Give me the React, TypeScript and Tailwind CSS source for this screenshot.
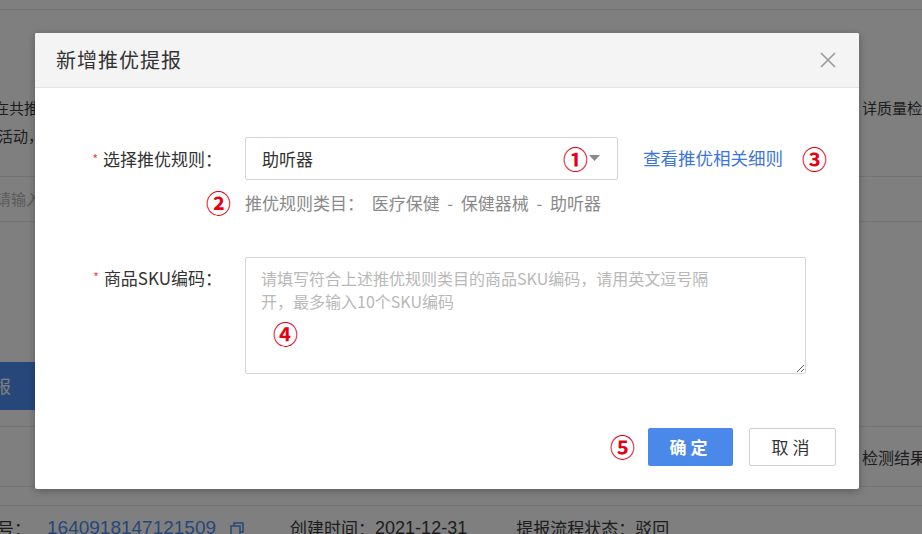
import React from "react";

const F = "font-['Noto_Sans_CJK_SC','Noto_Sans',sans-serif]";

function Num({ c, className = "" }: { c: string; className?: string }) {
  return (
    <span className={`text-[25px] leading-none font-bold text-[#e60012] ${className}`}>{c}</span>
  );
}

function Page() {
  return (
    <div className={`flex h-[534px] w-[922px] flex-col bg-white text-[#3a3a3a] ${F}`}>
      <div className="h-[10px] shrink-0 border-b border-[#e8e8e8]" />
      <div className="mt-[87px] flex h-[20px] shrink-0 items-center justify-between text-[15px] leading-none">
        <span className="-ml-[6px]">在共推优活动</span>
        <span className="-mr-[15px]">详质量检测</span>
      </div>
      <div className="mt-[8px] flex h-[20px] shrink-0 items-center text-[15px] leading-none">
        <span className="-ml-[2px]">活动，</span>
      </div>
      <div className="mt-[31px] flex h-[46px] shrink-0 items-center border-y border-[#e8e8e8] text-[15px] text-[#b5b5b5]">
        <span className="-ml-[4px]">请输入</span>
      </div>
      <div className="mt-[140px] flex h-[48px] w-[35px] shrink-0 items-center bg-[#4e8ef5] text-[17px] text-white">
        <span className="-ml-[6px]">报</span>
      </div>
      <div className="mt-[16px] flex h-[61px] shrink-0 items-center justify-end border-y border-[#e8e8e8] text-[16px] leading-none">
        <span className="-mr-[4px]">检测结果</span>
      </div>
      <div className="mt-[18px] flex h-[40px] shrink-0 items-start border-t border-[#e8e8e8] pt-[12px] text-[17px] leading-[20px]">
        <span className="-ml-[20px]">编号：</span>
        <span className="ml-[16px] font-['Liberation_Sans',sans-serif] text-[19px] text-[#4d8ff0]">1640918147121509</span>
        <svg width="14" height="14" viewBox="0 0 14 14" className="ml-[14px] mt-[4px]">
          <rect x="4" y="1" width="9" height="9" fill="none" stroke="#4d8ff0" strokeWidth="1.5" />
          <rect x="1" y="4" width="9" height="9" fill="white" stroke="#4d8ff0" strokeWidth="1.5" />
        </svg>
        <span className="ml-[46px]">创建时间：</span>
        <span className="font-['Liberation_Sans',sans-serif] text-[18px]">2021-12-31</span>
        <span className="ml-[49px]">提报流程状态：驳回</span>
      </div>
    </div>
  );
}

function Modal() {
  return (
    <div
      className={`absolute left-[35px] top-[33px] z-20 flex h-[456px] w-[824px] flex-col overflow-hidden rounded-[2px] bg-white shadow-[0_0_0_1200px_rgba(0,0,0,0.5),0_2px_8px_rgba(0,0,0,0.3)] ${F}`}
    >
      <div className="flex h-[55px] shrink-0 items-center justify-between border-b border-[#e3e3e3] bg-[#f4f4f4] pl-[21px] pr-[22px]">
        <span className="text-[20px] tracking-[1px] text-[#333]">新增推优提报</span>
        <svg width="18" height="18" viewBox="0 0 18 18">
          <path d="M2 2 L16 16 M16 2 L2 16" stroke="#9a9a9a" strokeWidth="1.6" />
        </svg>
      </div>

      <div className="flex flex-1 flex-col">
        <div className="mt-[49px] flex items-center">
          <div className="flex w-[187px] items-center justify-end text-[17px] text-[#333]">
            <span className="mr-[5px] text-[12px] text-[#f04545]">*</span>
            <span>选择推优规则：</span>
          </div>
          <div className="ml-[23px] flex h-[43px] w-[373px] items-center justify-between rounded-[2px] border border-[#d5d5d5] pl-[16px] pr-[17px]">
            <span className="text-[17px] text-[#333]">助听器</span>
            <div className="flex items-center">
              <Num c="①" />
              <svg width="11" height="7" viewBox="0 0 11 7" className="ml-[1px]">
                <path d="M0 0 L11 0 L5.5 6 Z" fill="#8a8a8a" />
              </svg>
            </div>
          </div>
          <span className="ml-[25px] text-[17.5px] text-[#3c76da]">查看推优相关细则</span>
          <Num c="③" className="ml-[19px]" />
        </div>

        <div className="mt-[10px] flex items-center">
          <div className="w-[171px]" />
          <Num c="②" />
          <span className="ml-[14px] whitespace-pre text-[17px] text-[#8a8a8a]">
            {"推优规则类目：  医疗保健  -  保健器械  -  助听器"}
          </span>
        </div>

        <div className="mt-[41px] flex items-start">
          <div className="flex w-[187px] items-center justify-end pt-[8px] text-[17px] text-[#333]">
            <span className="mr-[5px] text-[12px] text-[#f04545]">*</span>
            <span>商品SKU编码：</span>
          </div>
          <div className="relative ml-[23px]">
            <textarea
              className="block h-[117px] w-[561px] rounded-[2px] border border-[#d5d5d5] px-[15px] py-[9px] text-[16px] leading-[23px] text-[#333] outline-none placeholder:text-[#b8b8b8]"
              placeholder={"请填写符合上述推优规则类目的商品SKU编码，请用英文逗号隔\n开，最多输入10个SKU编码"}
            />
            <Num c="④" className="pointer-events-none absolute left-[28px] top-[64px]" />
          </div>
        </div>

        <div className="mt-[54px] flex items-center justify-end pr-[23px]">
          <Num c="⑤" className="mr-[13px]" />
          <button className="flex h-[38px] w-[85px] items-center justify-center rounded-[2px] bg-[#4a88ea] text-[17px] font-bold tracking-[4px] text-white">
            确定
          </button>
          <button className="ml-[16px] flex h-[38px] w-[87px] items-center justify-center rounded-[2px] border border-[#cfcfcf] bg-white text-[17px] tracking-[4px] text-[#333]">
            取消
          </button>
        </div>
      </div>
    </div>
  );
}

export default function App() {
  return (
    <div className="relative h-[534px] w-[922px] overflow-hidden bg-white">
      <Page />
      <Modal />
    </div>
  );
}
